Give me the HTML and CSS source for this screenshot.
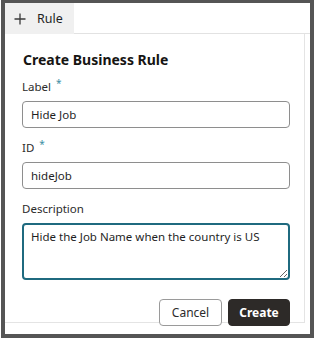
FILE: index.html
```html
<!DOCTYPE html>
<html lang="en">
<head>
  <meta charset="UTF-8">
  <title>Create Business Rule</title>
  <link rel="stylesheet" href="styles.css">
</head>
<body>

  <div class="frame">
    <div class="tab-row">
      <div class="tab">
        <svg class="plus" width="12" height="12" viewBox="0 0 12 12">
          <path d="M6 0.5V11.5M0.5 6H11.5" stroke="#3a3a3a" stroke-width="1.3" fill="none"/>
        </svg>
        <span>Rule</span>
      </div>
    </div>

    <div class="panel">
      <h1>Create Business Rule</h1>

      <div class="field">
        <label for="label">Label <span class="req">*</span></label>
        <input type="text" id="label" value="Hide Job">
      </div>

      <div class="field">
        <label for="rule-id">ID <span class="req">*</span></label>
        <input type="text" id="rule-id" value="hideJob">
      </div>

      <div class="field">
        <label for="desc">Description</label>
        <textarea id="desc">Hide the Job Name when the country is US</textarea>
      </div>

      <div class="actions">
        <button class="btn">Cancel</button>
        <button class="btn btn-primary">Create</button>
      </div>
    </div>
  </div>

</body>
</html>
```

FILE: styles.css
```css
body {
  margin: 0;
  padding: 0;
  background-color: #fff;
  font-family: "Noto Sans", "Open Sans", Arial, sans-serif;
  color: #1f1f1f;
}
.frame {
  margin-left: 1px;
  width: 305px;
  height: 331px;
  border-style: solid;
  border-color: #555;
  border-width: 3px 4px 4px 4px;
  background-color: #fff;
  display: flex;
  flex-direction: column;
}
.tab-row {
  height: 30px;
  display: flex;
  border-bottom: 1px solid #e2e2e2;
}
.tab {
  width: 69px;
  background-color: #f0f0f0;
  display: flex;
  align-items: center;
  padding-left: 9px;
  box-sizing: border-box;
  font-size: 12.5px;
  margin-bottom: -1px;
}
.plus {
  margin-right: 11px;
}
.panel {
  width: 300px;
  height: 289px;
  box-sizing: border-box;
  border-right: 1px solid #e4e4e4;
  border-bottom: 1px solid #e4e4e4;
  padding: 16px 14px 0 17px;
}
h1 {
  font-size: 14px;
  line-height: 20px;
  font-weight: bold;
  margin: 0 0 9px 1px;
  color: #161513;
}
.field {
  margin-bottom: 12px;
}
.field label {
  display: block;
  font-size: 11.5px;
  line-height: 16px;
  margin-bottom: 6px;
  color: #2b2b2b;
}
.req {
  color: #3c8ea3;
  font-size: 10px;
  line-height: 0;
  vertical-align: 4px;
  margin-left: 2px;
}
.field input[type="text"] {
  display: block;
  width: 268px;
  height: 27px;
  box-sizing: border-box;
  border: 1px solid #8e8e8e;
  border-radius: 4px;
  padding: 0 8px;
  font-family: inherit;
  font-size: 11.5px;
  color: #1f1f1f;
}
.field textarea {
  display: block;
  width: 268px;
  height: 57px;
  box-sizing: border-box;
  border: 2px solid #1f6a7f;
  border-radius: 4px;
  padding: 4px 7px;
  font-family: inherit;
  font-size: 11.5px;
  line-height: 16px;
  color: #1f1f1f;
  resize: both;
  outline: none;
}
.actions {
  display: flex;
  justify-content: flex-end;
  gap: 6px;
  width: 268px;
  margin-top: 19px;
}
.btn {
  width: 63px;
  height: 27px;
  border: 1px solid #9a9a9a;
  border-radius: 4px;
  background-color: #fff;
  font-family: inherit;
  font-size: 12px;
  color: #2b2b2b;
  padding: 0;
}
.btn-primary {
  width: 62px;
  background-color: #2d2a28;
  border-color: #2d2a28;
  color: #fff;
  font-weight: bold;
}
```
